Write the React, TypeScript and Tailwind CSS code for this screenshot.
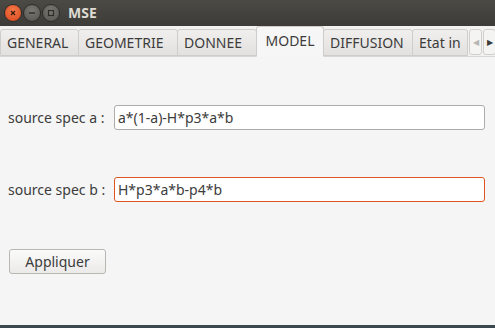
import { useState } from 'react'

const tabs = [
  { name: 'GENERAL', w: 'w-[79px]' },
  { name: 'GEOMETRIE', w: 'w-[100px]' },
  { name: 'DONNEE', w: 'w-[80px]' },
  { name: 'MODEL', w: 'w-[68px]' },
  { name: 'DIFFUSION', w: 'w-[90px]' },
  { name: 'Etat in', w: 'w-[56px]' },
]

function WinButton({ kind }: { kind: 'close' | 'min' | 'max' }) {
  const bg = kind === 'close' ? 'bg-[radial-gradient(circle_at_50%_35%,#f47a4a,#d9461c)]' : 'bg-[radial-gradient(circle_at_50%_35%,#7a7872,#55534e)]'
  return (
    <div className={`w-[18px] h-[18px] rounded-full ${bg} border border-[#2f2e2a] flex items-center justify-center`}>
      <svg width="10" height="10" viewBox="0 0 10 10">
        {kind === 'close' && <path d="M3 3 L7 7 M7 3 L3 7" stroke="#3a1a0e" strokeWidth="1.3" />}
        {kind === 'min' && <path d="M2 5 H8" stroke="#2e2d29" strokeWidth="1.4" />}
        {kind === 'max' && <rect x="2.5" y="2.5" width="5" height="5" fill="none" stroke="#2e2d29" strokeWidth="1.2" />}
      </svg>
    </div>
  )
}

export default function App() {
  const [active, setActive] = useState('MODEL')
  const [specA, setSpecA] = useState('a*(1-a)-H*p3*a*b')
  const [specB, setSpecB] = useState('H*p3*a*b-p4*b')

  return (
    <div className="w-[495px] h-[328px] flex flex-col bg-[#f5f5f5] overflow-hidden" style={{ fontFamily: '"Noto Sans", "Open Sans", sans-serif' }}>
      {/* title bar */}
      <div className="h-[26px] shrink-0 bg-[linear-gradient(#4b4a45,#3c3b37)] flex items-center pl-[4px]">
        <div className="flex gap-[1px]">
          <WinButton kind="close" />
          <WinButton kind="min" />
          <WinButton kind="max" />
        </div>
        <span className="ml-[8px] text-[14px] font-bold text-[#dfdbd2] leading-none">MSE</span>
      </div>

      {/* tab bar */}
      <div className="h-[31px] shrink-0 flex items-end bg-[#f2f1f0] border-b border-[#d8d6d2]">
        {tabs.map(t => {
          const on = t.name === active
          return (
            <button
              key={t.name}
              onClick={() => setActive(t.name)}
              className={`${t.w} shrink-0 overflow-hidden whitespace-nowrap text-[14px] border border-[#cfcdc9] rounded-t-[3px] -ml-px first:ml-0 ${on ? 'h-[31px] bg-[#f6f6f6] text-[#3c3c3c] border-b-[#f6f6f6] relative z-10 -mb-px pb-[2px]' : 'h-[27px] bg-[linear-gradient(#f0efee,#e2e1df)] text-[#3c3c3c] px-[6px] text-left'}`}
            >
              {t.name}
            </button>
          )
        })}
        <div className="flex h-[27px] ml-px">
          <div className="w-[13px] h-[26px] border border-[#d2d0cc] rounded-[3px] bg-[#f4f4f3] flex items-center justify-center text-[#b8b6b2] text-[8px]">◀</div>
          <div className="w-[13px] h-[26px] ml-[1px] border border-[#d2d0cc] rounded-[3px] bg-[#f4f4f3] flex items-center justify-center text-[#3c3c3c] text-[8px]">▶</div>
        </div>
      </div>

      {/* content */}
      <div className="flex-1 flex flex-col pl-[8px] pr-[10px] text-[14px] text-[#3c3c3c]">
        <div className="flex items-center mt-[48px]">
          <span className="w-[106px] shrink-0 whitespace-nowrap">source spec a :</span>
          <input
            value={specA}
            onChange={e => setSpecA(e.target.value)}
            className="flex-1 h-[25px] px-[3px] bg-white border border-[#aeaca8] rounded-[3px] outline-none text-[#3c3c3c]"
          />
        </div>
        <div className="flex items-center mt-[47px]">
          <span className="w-[106px] shrink-0 whitespace-nowrap">source spec b :</span>
          <input
            value={specB}
            onChange={e => setSpecB(e.target.value)}
            className="flex-1 h-[25px] px-[3px] bg-white border border-[#e0541f] rounded-[3px] outline-none text-[#3c3c3c]"
          />
        </div>
        <div className="mt-[47px]">
          <button className="w-[97px] h-[25px] ml-px border border-[#b9b7b3] rounded-[3px] bg-[linear-gradient(#fbfbfb,#ebeae8)] text-[#3c3c3c]">
            Appliquer
          </button>
        </div>
      </div>
      <div className="h-[3px] shrink-0 bg-[#3b4a50]" />
    </div>
  )
}
